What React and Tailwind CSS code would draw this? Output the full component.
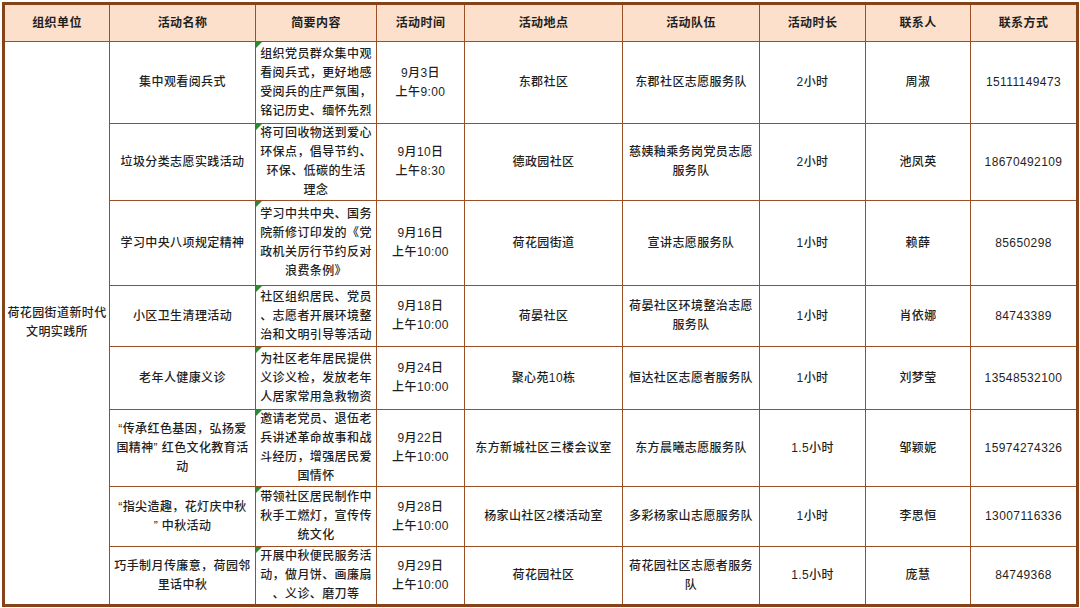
const rows = [
  {
    h: 82,
    name: ['集中观看阅兵式'],
    desc: ['组织党员群众集中观', '看阅兵式，更好地感', '受阅兵的庄严氛围，', '铭记历史、缅怀先烈'],
    time: ['9月3日', '上午9:00'],
    place: ['东郡社区'],
    team: ['东郡社区志愿服务队'],
    dur: '2小时',
    person: '周淑',
    phone: '15111149473',
  },
  {
    h: 76,
    name: ['垃圾分类志愿实践活动'],
    desc: ['将可回收物送到爱心', '环保点，倡导节约、', '环保、低碳的生活', '理念'],
    time: ['9月10日', '上午8:30'],
    place: ['德政园社区'],
    team: ['慈姨釉乘务岗党员志愿', '服务队'],
    dur: '2小时',
    person: '池凤英',
    phone: '18670492109',
  },
  {
    h: 85,
    name: ['学习中央八项规定精神'],
    desc: ['学习中共中央、国务', '院新修订印发的《党', '政机关厉行节约反对', '浪费条例》'],
    time: ['9月16日', '上午10:00'],
    place: ['荷花园街道'],
    team: ['宣讲志愿服务队'],
    dur: '1小时',
    person: '赖薛',
    phone: '85650298',
  },
  {
    h: 61,
    name: ['小区卫生清理活动'],
    desc: ['社区组织居民、党员', '、志愿者开展环境整', '治和文明引导等活动'],
    time: ['9月18日', '上午10:00'],
    place: ['荷晏社区'],
    team: ['荷晏社区环境整治志愿', '服务队'],
    dur: '1小时',
    person: '肖依娜',
    phone: '84743389',
  },
  {
    h: 63,
    name: ['老年人健康义诊'],
    desc: ['为社区老年居民提供', '义诊义检，发放老年', '人居家常用急救物资'],
    time: ['9月24日', '上午10:00'],
    place: ['聚心苑10栋'],
    team: ['恒达社区志愿者服务队'],
    dur: '1小时',
    person: '刘梦莹',
    phone: '13548532100',
  },
  {
    h: 77,
    name: ['“传承红色基因，弘扬爱', '国精神” 红色文化教育活', '动'],
    desc: ['邀请老党员、退伍老', '兵讲述革命故事和战', '斗经历，增强居民爱', '国情怀'],
    time: ['9月22日', '上午10:00'],
    place: ['东方新城社区三楼会议室'],
    team: ['东方晨曦志愿服务队'],
    dur: '1.5小时',
    person: '邹颖妮',
    phone: '15974274326',
  },
  {
    h: 60,
    name: ['“指尖造趣，花灯庆中秋', '” 中秋活动'],
    desc: ['带领社区居民制作中', '秋手工燃灯，宣传传', '统文化'],
    time: ['9月28日', '上午10:00'],
    place: ['杨家山社区2楼活动室'],
    team: ['多彩杨家山志愿服务队'],
    dur: '1小时',
    person: '李思恒',
    phone: '13007116336',
  },
  {
    h: 59,
    name: ['巧手制月传廉意，荷园邻', '里话中秋'],
    desc: ['开展中秋便民服务活', '动，做月饼、画廉扇', '、义诊、磨刀等'],
    time: ['9月29日', '上午10:00'],
    place: ['荷花园社区'],
    team: ['荷花园社区志愿者服务', '队'],
    dur: '1.5小时',
    person: '庞慧',
    phone: '84749368',
  },
];

const headers = ['组织单位', '活动名称', '简要内容', '活动时间', '活动地点', '活动队伍', '活动时长', '联系人', '联系方式'];

function Lines({ items }) {
  return items.map((t, i) => (
    <div key={i} className="whitespace-nowrap">
      {t}
    </div>
  ));
}

const cell = 'border-[1.5px] border-[#9c4f24] text-center align-middle p-0';

export default function App() {
  return (
    <div
      className="w-[1080px] h-[608px] bg-white pl-[2px] pt-[2px] text-[#1f1f1f]"
      style={{ fontFamily: '"Liberation Sans", "Noto Sans CJK SC", sans-serif' }}
    >
      <table className="table-fixed border-collapse border-[3px] border-[#864318] w-[1074px] text-[12px] leading-[19px] tracking-[0.4px] font-medium">
        <colgroup>
          <col className="w-[106px]" />
          <col className="w-[146px]" />
          <col className="w-[121px]" />
          <col className="w-[88px]" />
          <col className="w-[158px]" />
          <col className="w-[137px]" />
          <col className="w-[106px]" />
          <col className="w-[105px]" />
          <col className="w-[107px]" />
        </colgroup>
        <thead>
          <tr className="h-[38px] bg-[#fde0cc]">
            {headers.map(h => (
              <th key={h} className={`${cell} font-bold text-[12px]`}>
                {h}
              </th>
            ))}
          </tr>
        </thead>
        <tbody>
          {rows.map((r, i) => (
            <tr key={i} style={{ height: r.h }}>
              {i === 0 && (
                <td rowSpan={rows.length} className={cell}>
                  <div>荷花园街道新时代</div>
                  <div>文明实践所</div>
                </td>
              )}
              <td className={cell}>
                <Lines items={r.name} />
              </td>
              <td className={`${cell} relative`}>
                <span className="absolute left-0 top-0 w-0 h-0 border-t-[6px] border-r-[6px] border-t-[#2a8a32] border-r-transparent" />
                <Lines items={r.desc} />
              </td>
              <td className={cell}>
                <Lines items={r.time} />
              </td>
              <td className={cell}>
                <Lines items={r.place} />
              </td>
              <td className={cell}>
                <Lines items={r.team} />
              </td>
              <td className={cell}>{r.dur}</td>
              <td className={cell}>{r.person}</td>
              <td className={cell}>{r.phone}</td>
            </tr>
          ))}
        </tbody>
      </table>
    </div>
  );
}
